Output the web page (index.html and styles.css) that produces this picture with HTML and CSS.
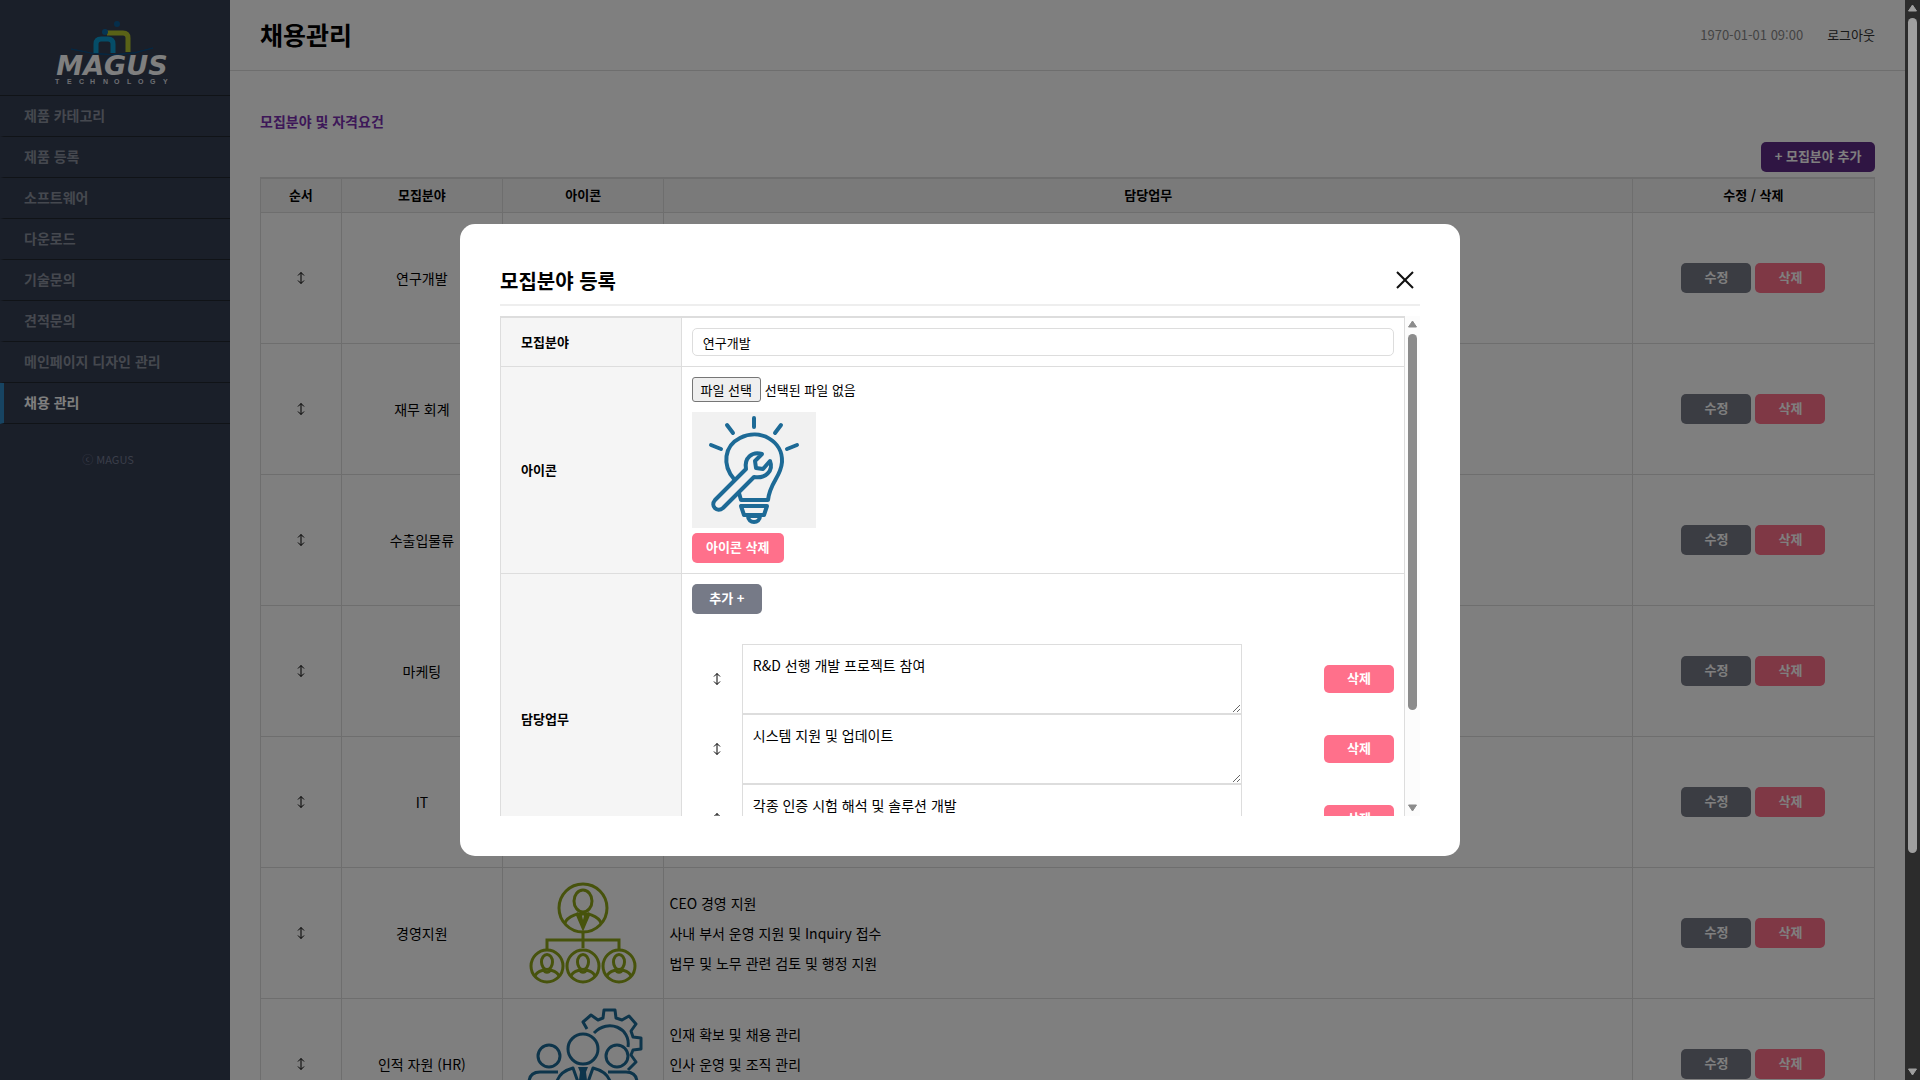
FILE: index.html
```html
<!DOCTYPE html>
<html lang="ko">
<head>
<meta charset="utf-8">
<title>채용관리</title>
<link rel="stylesheet" href="styles.css">
</head>
<body>
<svg class="defs" aria-hidden="true">
  <symbol id="bulb" viewBox="0 0 124 116">
    <g fill="none" stroke="#1d6a96" stroke-width="4" stroke-linecap="round" stroke-linejoin="round">
      <path d="M62 6v9M35 13l6 8M89 13l-6 8M19 33l10 4M105 33l-10 4"/>
      <path d="M42 67C30 53 32 34 48 26c20-10 43 3 42 24-1 15-12 20-14 38H49l-2-7"/>
      <path d="M23 88l31-31c-2-11 6-18 16-15l-7 7 1 7 7 1 7-8c4 10-5 18-16 16L31 96c-6 5-13-2-8-8z"/>
      <path d="M49 94h26l-3 9H52zM56 104c0 8 12 8 12 0z"/>
    </g>
  </symbol>
  <symbol id="updown" viewBox="0 0 10 14">
    <path d="M5 1.500v11M2 4.500l3-3 3 3M2 9.500l3 3 3-3" fill="none" stroke="currentColor" stroke-width="1"/>
  </symbol>
  <symbol id="head" viewBox="0 0 36 36">
    <g fill="none" stroke="currentColor" stroke-width="3">
      <circle cx="18" cy="18" r="16"/>
      <ellipse cx="18" cy="14" rx="5.500" ry="7.500"/>
      <path d="M6 28c2-5 6-5 9-6 1 3 5 3 6 0 3 1 7 1 9 6"/>
    </g>
  </symbol>
</svg>

<div class="window">
  <div class="app">
    <aside class="sidebar">
      <a class="logo" href="#" aria-label="MAGUS TECHNOLOGY">
        <svg width="130" height="72" viewBox="0 0 130 72">
          <path d="M24 34q45 12 82-1q-36 13-82 1z" fill="#0b4f86" stroke="#0b4f86"/>
          <g fill="none" stroke-width="5">
            <path d="M60 18h16q5 0 5 5v14" stroke="#b4c52e"/>
            <path d="M49 38V29q0-5 5-5h7q5 0 5 5v9" stroke="#0a9bd0"/>
          </g>
          <circle cx="70" cy="9" r="3" fill="#0b5c96"/>
          <circle cx="58" cy="17" r="3" fill="#0b6aa6"/>
          <text class="logo-name" x="65" y="60" text-anchor="middle">MAGUS</text>
          <text class="logo-sub" x="8 20 32 43 56 67 80 91 103 116" y="69">TECHNOLOGY</text>
        </svg>
      </a>
      <nav class="menu">
        <a href="#">제품 카테고리</a>
        <a href="#">제품 등록</a>
        <a href="#">소프트웨어</a>
        <a href="#">다운로드</a>
        <a href="#">기술문의</a>
        <a href="#">견적문의</a>
        <a href="#">메인페이지 디자인 관리</a>
        <a href="#" class="active">채용 관리</a>
      </nav>
      <p class="copy">ⓒ MAGUS</p>
    </aside>

    <main class="main">
      <header class="topbar">
        <h1>채용관리</h1>
        <div class="account"><time>1970-01-01 09:00</time><a href="#">로그아웃</a></div>
      </header>
      <section class="content">
        <h2>모집분야 및 자격요건</h2>
        <div class="actions"><button class="btn btn-add">+ 모집분야 추가</button></div>
        <table class="list">
          <colgroup><col class="c5"><col class="c10"><col class="c10"><col class="c60"><col class="c15"></colgroup>
          <thead><tr><th>순서</th><th>모집분야</th><th>아이콘</th><th>담당업무</th><th>수정 / 삭제</th></tr></thead>
          <tbody>
            <tr><td><svg class="sort"><use href="#updown"/></svg></td><td>연구개발</td><td><svg class="pic"><use href="#bulb"/></svg></td><td class="tasks"></td><td><div class="pair"><button class="btn btn-edit">수정</button><button class="btn btn-del">삭제</button></div></td></tr>
            <tr><td><svg class="sort"><use href="#updown"/></svg></td><td>재무 회계</td><td></td><td class="tasks"></td><td><div class="pair"><button class="btn btn-edit">수정</button><button class="btn btn-del">삭제</button></div></td></tr>
            <tr><td><svg class="sort"><use href="#updown"/></svg></td><td>수출입물류</td><td></td><td class="tasks"></td><td><div class="pair"><button class="btn btn-edit">수정</button><button class="btn btn-del">삭제</button></div></td></tr>
            <tr><td><svg class="sort"><use href="#updown"/></svg></td><td>마케팅</td><td></td><td class="tasks"></td><td><div class="pair"><button class="btn btn-edit">수정</button><button class="btn btn-del">삭제</button></div></td></tr>
            <tr><td><svg class="sort"><use href="#updown"/></svg></td><td>IT</td><td></td><td class="tasks"></td><td><div class="pair"><button class="btn btn-edit">수정</button><button class="btn btn-del">삭제</button></div></td></tr>
            <tr><td><svg class="sort"><use href="#updown"/></svg></td><td>경영지원</td>
              <td><svg class="pic org" viewBox="0 0 124 116">
                <g fill="none" stroke="currentColor" stroke-width="3">
                  <circle cx="62" cy="33" r="24"/>
                  <ellipse cx="62" cy="26" rx="9" ry="11"/>
                  <path d="M44 48c2-6 8-7 12-9l6 14 6-14c4 2 10 3 12 9M59 39h6l-3 12zM62 57v16M26 74V65h72v9"/>
                </g>
                <use href="#head" x="8" y="73" width="36" height="36"/>
                <use href="#head" x="44" y="73" width="36" height="36"/>
                <use href="#head" x="80" y="73" width="36" height="36"/>
              </svg></td>
              <td class="tasks">CEO 경영 지원<br>사내 부서 운영 지원 및 Inquiry 접수<br>법무 및 노무 관련 검토 및 행정 지원</td><td><div class="pair"><button class="btn btn-edit">수정</button><button class="btn btn-del">삭제</button></div></td></tr>
            <tr><td><svg class="sort"><use href="#updown"/></svg></td><td>인적 자원 (HR)</td>
              <td><svg class="pic" viewBox="0 0 124 116">
                <g fill="none" stroke="#1d6a96" stroke-width="3" stroke-linejoin="round">
                  <path d="M66 23l-4-7 8-7 7 5 5-2 1-8h11l1 8 6 2 7-4 7 8-5 7 2 6 8 1v11l-8 1-2 5 5 7-8 8"/>
                  <path d="M73 27c14-15 37-5 34 14"/>
                  <circle cx="62" cy="43" r="15"/><circle cx="28" cy="50" r="11"/><circle cx="96" cy="50" r="11"/>
                  <path d="M8 96V77q0-11 11-11h18M116 96V77q0-11-11-11H87M35 96V79q2-13 17-17l10 28 10-28q16 4 18 17v17"/>
                </g>
                <path d="M57 61h10l-2 5 3 25h-12l3-25z" fill="#1d6a96"/>
              </svg></td>
              <td class="tasks">인재 확보 및 채용 관리<br>인사 운영 및 조직 관리<br><br></td><td><div class="pair"><button class="btn btn-edit">수정</button><button class="btn btn-del">삭제</button></div></td></tr>
          </tbody>
        </table>
      </section>
    </main>
    <div class="dim"></div>
  </div>
  <div class="scrollbar scrollbar-page" aria-hidden="true">
    <svg width="9" height="8"><path d="M4.500 1L8.500 7h-8z"/></svg>
    <div class="track"><div class="thumb"></div></div>
    <svg width="9" height="8"><path d="M4.500 7L8.500 1h-8z"/></svg>
  </div>
</div>

<div class="layer">
  <div class="modal" role="dialog" aria-labelledby="modal-title">
    <div class="modal-head">
      <h2 id="modal-title">모집분야 등록</h2>
      <button class="close" aria-label="닫기"><svg width="18" height="18" viewBox="0 0 18 18"><path d="M1 1l16 16M17 1L1 17" fill="none" stroke="#111" stroke-width="2"/></svg></button>
    </div>
    <div class="modal-body">
      <div class="modal-scroll">
        <table class="form">
          <tr><th><label for="field">모집분야</label></th><td><input class="text" id="field" type="text" value="연구개발"></td></tr>
          <tr><th><label for="icon-file">아이콘</label></th><td>
            <div class="file"><input class="file-input" id="icon-file" type="file"><label class="file-btn" for="icon-file">파일 선택</label><span>선택된 파일 없음</span></div>
            <svg class="pic preview"><use href="#bulb"/></svg>
            <button class="btn btn-del btn-wide">아이콘 삭제</button>
          </td></tr>
          <tr><th>담당업무</th><td>
            <button class="btn btn-gray">추가 +</button>
            <ul class="duties">
              <li><svg class="sort"><use href="#updown"/></svg><textarea aria-label="담당업무 1">R&amp;D 선행 개발 프로젝트 참여</textarea><button class="btn btn-del btn-low">삭제</button></li>
              <li><svg class="sort"><use href="#updown"/></svg><textarea aria-label="담당업무 2">시스템 지원 및 업데이트</textarea><button class="btn btn-del btn-low">삭제</button></li>
              <li><svg class="sort"><use href="#updown"/></svg><textarea aria-label="담당업무 3">각종 인증 시험 해석 및 솔루션 개발</textarea><button class="btn btn-del btn-low">삭제</button></li>
            </ul>
          </td></tr>
        </table>
      </div>
      <div class="scrollbar scrollbar-modal" aria-hidden="true">
        <svg width="9" height="8"><path d="M4.500 1L8.500 7h-8z"/></svg>
        <div class="track"><div class="thumb"></div></div>
        <svg width="9" height="8"><path d="M4.500 7L8.500 1h-8z"/></svg>
      </div>
    </div>
  </div>
</div>
</body>
</html>
```
FILE: styles.css
```css
* { box-sizing: border-box; margin: 0; padding: 0; }
body, button, input, textarea {
  font-family: "Noto Sans CJK KR", "Noto Sans", sans-serif;
}
body { font-size: 14px; line-height: 20px; color: #000; background: #fff; overflow: hidden; }
a { color: inherit; text-decoration: none; }
.defs { position: absolute; width: 0; height: 0; }

.window { display: flex; height: 100vh; }
.app { position: relative; display: flex; flex: 1; min-width: 0; overflow: hidden; }
.dim { position: absolute; inset: 0; background: rgba(0, 0, 0, .5); }

.sidebar { width: 230px; flex: none; background: #343e52; color: #8b919e; }
.logo { display: flex; justify-content: center; height: 95px; padding: 15px 6px 0 0; }
.logo-name { font: italic bold 27px "DejaVu Sans", sans-serif; fill: #fff; }
.logo-sub { font: bold 7px "Liberation Sans", sans-serif; fill: #dadde2; }
.menu { border-top: 1px solid #20262f; }
.menu a {
  display: block; height: 41px; padding-left: 20px; line-height: 39px;
  border-left: 4px solid transparent; border-bottom: 1px solid #20262f; font-weight: bold;
}
.menu .active { border-left-color: #2f88c4; color: #fff; }
.copy { padding: 25px 14px 0 0; text-align: center; font-size: 11px; color: #747c92; }

.main { flex: 1; min-width: 0; }
.topbar {
  display: flex; align-items: center; justify-content: space-between;
  height: 71px; padding: 0 30px; border-bottom: 1px solid #ddd;
}
h1 { padding-bottom: 2px; font-size: 25px; line-height: 36px; }
.account { display: flex; gap: 24px; font-size: 13px; color: #333; }
.account time { color: #888; }
.content { padding: 40px 30px 0; }
.content h2 { font-size: 14px; line-height: 20px; color: #7a2fb0; }
.actions { display: flex; justify-content: flex-end; padding: 11px 0 5px; }

.btn {
  display: block; width: 70px; height: 30px; padding-bottom: 2px; border: 0; border-radius: 5px;
  font-size: 13px; line-height: 20px; font-weight: bold; color: #fff;
}
.btn-add { width: 114px; background: #5f2b87; }
.btn-edit, .btn-gray { background: #767a87; }
.btn-del { background: #ff708b; }
.btn-wide { width: 92px; }
.btn-low { height: 28px; }

table { width: 100%; border-collapse: collapse; }
th { font-size: 13px; font-weight: bold; background: #f5f5f5; }
.list { table-layout: fixed; border-top: 2px solid #ddd; text-align: center; }
.list th { height: 34px; border: 1px solid #ddd; border-top-width: 2px; }
.list td { height: 131px; border: 1px solid #ddd; }
.list .tasks { padding-left: 5px; text-align: left; line-height: 30px; }
.c5 { width: 5%; }
.c10 { width: 10%; }
.c60 { width: 60%; }
.c15 { width: 15%; }
.pair { display: flex; justify-content: center; gap: 4px; }
.sort { width: 10px; height: 14px; vertical-align: middle; }
.list .sort { display: block; margin: 0 auto; }
.pic { display: block; width: 124px; height: 116px; margin: 0 auto; }
.org { color: #8fa619; }

.scrollbar {
  display: flex; flex-direction: column; align-items: center; flex: none;
  width: 15px; padding: 4px 0; gap: 6px;
}
.scrollbar svg { flex: none; stroke-width: 1; stroke-linejoin: round; }
.track { flex: 1; width: 9px; }
.thumb { border-radius: 5px; }
.scrollbar-page { background: #2c2c2c; fill: #9f9f9f; stroke: #9f9f9f; }
.scrollbar-page .thumb { height: 80%; background: #9f9f9f; }
.scrollbar-modal { background: #fcfcfc; fill: #8b8b8b; stroke: #8b8b8b; }
.scrollbar-modal .thumb { height: 81%; background: #8b8b8b; }

.layer { position: fixed; inset: 0; display: flex; align-items: center; justify-content: center; }
.modal { width: 1000px; max-width: 90%; padding: 40px; border-radius: 15px; background: #fff; }
.modal-head {
  display: flex; align-items: center; justify-content: space-between;
  height: 42px; padding: 0 6px 8px 0; border-bottom: 2px solid #eee; margin-bottom: 10px;
}
.modal-head h2 { padding-top: 2px; font-size: 20px; line-height: 30px; }
.close { border: 0; background: none; }
.close svg { display: block; }
.modal-body { display: flex; height: 500px; }
.modal-scroll { flex: 1; min-width: 0; overflow-y: auto; scrollbar-width: none; }
.form th { width: 20%; padding-left: 20px; text-align: left; border: 1px solid #ddd; }
.form td { padding: 10px; border: 1px solid #ddd; }
.form tr:first-child > * { border-top-width: 2px; }
.text {
  display: block; width: 100%; height: 28px; padding: 0 10px;
  border: 1px solid #ddd; border-radius: 5px; font-size: 13px; color: #000;
}
.file { display: flex; align-items: center; gap: 4px; font-size: 13px; }
.file-input { position: absolute; width: 1px; height: 1px; opacity: 0; }
.file-btn {
  width: 69px; height: 25px; line-height: 23px; text-align: center;
  border: 1px solid #767676; border-radius: 3px; background: #efefef;
}
.preview { margin: 10px 0 5px; background: #f1f1f1; }
.duties { margin-top: 30px; list-style: none; }
.duties li { display: flex; align-items: center; }
.duties .sort { margin: 0 20px; }
.duties textarea {
  width: 500px; height: 70px; padding: 10px; border: 1px solid #ddd;
  font-size: 14px; line-height: 20px; color: #000;
}
.duties .btn { margin-left: auto; }
```
